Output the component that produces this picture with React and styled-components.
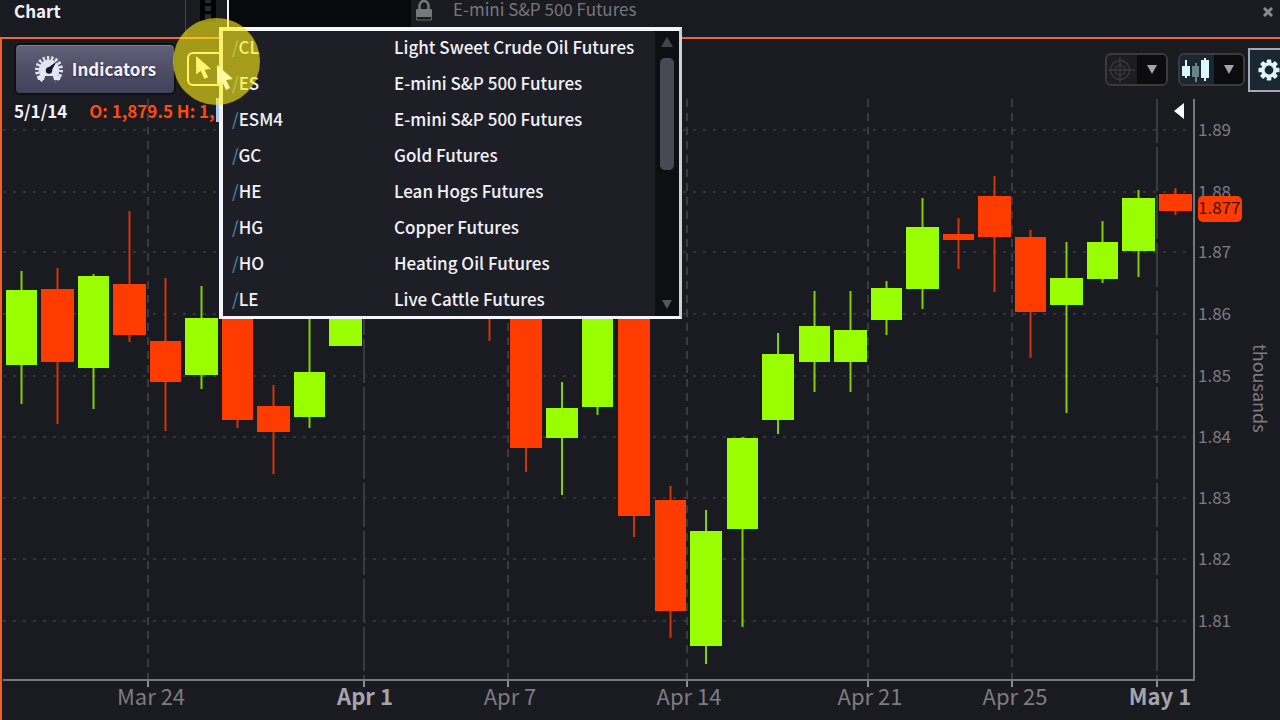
import React, { useState } from 'react';
import styled, { createGlobalStyle } from 'styled-components';

const GlobalStyle = createGlobalStyle`
  * {
    box-sizing: border-box;
  }

  body {
    margin: 0;
    background: #1a1a21;
    color: #f2f2fa;
    font-family: 'Noto Sans CJK SC', 'Noto Sans', sans-serif;
    font-size: 17px;
    line-height: 24px;
    overflow: hidden;
  }

  button,
  input {
    font: inherit;
    color: inherit;
  }
`;

const Window = styled.div`
  position: relative;
  display: flex;
  flex-direction: column;
  min-height: 100vh;
`;

const Header = styled.header`
  display: flex;
  align-items: stretch;
  height: 37px;
`;

const Title = styled.h1`
  flex: 0 0 186px;
  margin: 0;
  padding: 0 14px;
  border-right: 1px solid #44444c;
  font-size: 17px;
  line-height: 22px;
  font-weight: 700;
`;

const LinkStrip = styled.div`
  flex: 0 0 41px;
  padding-left: 14px;
`;

const SymbolInput = styled.input`
  flex: 0 0 184px;
  min-width: 0;
  padding: 0 8px;
  border: 0;
  border-left: 2px solid #f2f2fa;
  border-radius: 0;
  background: #08090d;
  outline: none;
`;

const SymbolName = styled.div`
  flex: 1;
  display: flex;
  align-items: flex-start;
  gap: 20px;
  padding-left: 4px;
  color: #77777c;
  font-size: 17px;
  line-height: 18px;
`;

const CloseButton = styled.button`
  display: flex;
  align-items: center;
  justify-content: center;
  width: 24px;
  height: 24px;
  padding: 0;
  border: 0;
  background: none;
  color: #8a8a92;
`;

const Panel = styled.main`
  flex: 1;
  border-top: 2px solid #f0663a;
  border-left: 2px solid #f0602a;
`;

const Toolbar = styled.div`
  display: flex;
  align-items: center;
  gap: 11px;
  height: 59px;
  padding-left: 12px;
`;

const IndicatorsButton = styled.button`
  display: flex;
  align-items: center;
  justify-content: center;
  gap: 8px;
  width: 162px;
  height: 52px;
  padding: 0;
  border: 2px solid #101014;
  border-radius: 6px;
  background: linear-gradient(#63617b, #504e66 50%, #42405a);
  box-shadow: inset 0 1px 0 #807e92;
  font-weight: 700;
  text-shadow: 0 1px 2px #222230;
`;

const PointerButton = styled.button`
  width: 64px;
  height: 34px;
  padding: 2px 0 0 7px;
  border: 2px solid #fff8d0;
  border-radius: 6px;
  background: none;
  text-align: left;
`;

const Tools = styled.div`
  display: flex;
  align-items: center;
  gap: 10px;
  margin-left: auto;
  padding-top: 2px;
`;

const SplitButton = styled.div`
  display: flex;
  height: 33px;
  border: 2px solid #3a3a40;
  border-radius: 6px;
  overflow: hidden;
  background: ${(p) => (p.$active ? '#1a2730' : '#1c1c21')};
`;

const SplitPart = styled.button`
  display: flex;
  align-items: center;
  justify-content: center;
  width: ${(p) => p.$width}px;
  padding: 0;
  border: 0;
  background: ${(p) => (p.$dark ? '#0c0c0f' : 'transparent')};
`;

const SettingsButton = styled.button`
  display: flex;
  align-items: center;
  width: 32px;
  height: 44px;
  margin-left: -7px;
  padding: 0 0 0 8px;
  border: 2px solid #a4a8b6;
  border-right: 0;
  background: #1a2730;
  overflow: hidden;
`;

const ChartArea = styled.section`
  position: relative;
`;

const Quote = styled.div`
  position: absolute;
  top: 0;
  left: 12px;
  display: flex;
  gap: 22px;
  width: 205px;
  height: 24px;
  border-right: 3px solid #a9c4ff;
  font-size: 17px;
  line-height: 26px;
  font-weight: 700;
  white-space: nowrap;
`;

const QuoteValues = styled.span`
  color: #ff4a12;
`;

const Chart = styled.svg`
  display: block;
  width: 100%;
  height: auto;
`;

const AxisText = styled.text`
  fill: ${(p) => (p.$strong ? '#a4a4ac' : '#7c7c82')};
  font-size: ${(p) => p.$size}px;
  font-weight: ${(p) => (p.$strong ? 700 : 400)};
  text-anchor: ${(p) => p.$anchor || 'start'};
`;

const LastPrice = styled.text`
  fill: #3a1408;
  font-size: 17px;
`;

const Menu = styled.div`
  position: absolute;
  top: 27px;
  left: 219px;
  display: flex;
  width: 463px;
  height: 292px;
  border: solid #f4f4fc;
  border-width: 4px 3px 3px 4px;
  border-right-color: #cfd0da;
  background: #1e1f26;
`;

const MenuList = styled.ul`
  flex: 1;
  margin: 0;
  padding: 0;
  overflow: hidden;
  list-style: none;
`;

const MenuItem = styled.button`
  display: grid;
  grid-template-columns: 162px 1fr;
  width: 100%;
  height: 36px;
  padding: 0 0 2px 9px;
  border: 0;
  background: none;
  font-size: 17px;
  font-weight: 500;
  line-height: 32px;
  text-align: left;
  white-space: nowrap;
`;

const Slash = styled.span`
  color: #4a7fa8;
`;

const ScrollTrack = styled.div`
  display: flex;
  flex-direction: column;
  align-items: center;
  width: 24px;
  padding: 6px 0;
  background: #0e0f12;
`;

const ScrollThumb = styled.div`
  width: 14px;
  height: 112px;
  margin: 11px 0 auto;
  border-radius: 5px;
  background: #494954;
`;

const Highlight = styled.div`
  position: absolute;
  top: 18px;
  left: 173px;
  width: 87px;
  height: 87px;
  border-radius: 50%;
  background: rgba(255, 240, 20, 0.6);
  pointer-events: none;
`;

const Cursor = styled.svg`
  position: absolute;
  top: 64px;
  left: 217px;
  pointer-events: none;
`;

const symbols = [
  ['CL', 'Light Sweet Crude Oil Futures'],
  ['ES', 'E-mini S&P 500 Futures'],
  ['ESM4', 'E-mini S&P 500 Futures'],
  ['GC', 'Gold Futures'],
  ['HE', 'Lean Hogs Futures'],
  ['HG', 'Copper Futures'],
  ['HO', 'Heating Oil Futures'],
  ['LE', 'Live Cattle Futures'],
];

const prices = [
  [130, '1.89'],
  [192, '1.88'],
  [252, '1.87'],
  [314, '1.86'],
  [376, '1.85'],
  [437, '1.84'],
  [498, '1.83'],
  [559, '1.82'],
  [621, '1.81'],
];

// x of the grid line, x of the label centre, label, first of month
const dates = [
  [148, 151, 'Mar 24', false],
  [364, 365, 'Apr 1', true],
  [508, 510, 'Apr 7', false],
  [687, 689, 'Apr 14', false],
  [868, 870, 'Apr 21', false],
  [1012, 1015, 'Apr 25', false],
  [1157, 1160, 'May 1', true],
];

// left, right, body top, body bottom, high, low, up
const candles = [
  [6, 37, 290, 365, 271, 404, 1],
  [41, 74, 289, 362, 268, 424, 0],
  [78, 109, 276, 368, 274, 409, 1],
  [113, 146, 284, 335, 211, 342, 0],
  [150, 181, 341, 382, 278, 431, 0],
  [185, 218, 318, 375, 286, 389, 1],
  [222, 253, 290, 420, 280, 428, 0],
  [257, 290, 406, 432, 385, 474, 0],
  [294, 325, 372, 417, 300, 428, 1],
  [329, 362, 290, 346, 280, 346, 1],
  [474, 505, 270, 310, 260, 341, 0],
  [510, 542, 290, 448, 280, 472, 0],
  [546, 578, 408, 438, 382, 495, 1],
  [582, 613, 290, 407, 280, 415, 1],
  [618, 650, 290, 516, 280, 537, 0],
  [655, 686, 500, 611, 486, 638, 0],
  [690, 722, 531, 646, 510, 664, 1],
  [727, 758, 438, 529, 437, 627, 1],
  [762, 794, 354, 420, 333, 434, 1],
  [799, 830, 326, 362, 291, 392, 1],
  [834, 867, 330, 362, 291, 392, 1],
  [871, 902, 288, 320, 281, 335, 1],
  [906, 939, 227, 289, 198, 309, 1],
  [943, 974, 234, 240, 218, 269, 0],
  [978, 1011, 196, 237, 176, 292, 0],
  [1015, 1046, 237, 312, 230, 358, 0],
  [1050, 1083, 278, 305, 242, 413, 1],
  [1087, 1118, 242, 279, 221, 283, 1],
  [1122, 1155, 198, 251, 190, 277, 1],
  [1159, 1192, 194, 211, 188, 215, 0],
];

const GaugeIcon = () => (
  <svg width="30" height="28" viewBox="0 0 30 28" aria-hidden="true">
    <circle cx="15" cy="15" r="12" fill="none" stroke="#e4e4f6" strokeWidth="4" strokeDasharray="2.2 1.8" pathLength="72" />
    <circle cx="15" cy="15" r="10.4" fill="#e4e4f6" />
    <path d="M8 28l3-7h8l3 7z" fill="#4a4860" />
    <path d="M3 21h8l-1 4H4zM27 21h-8l1 4h6z" fill="#e4e4f6" />
    <path d="M13.400 13.200L22.500 6.500l-5 9.300z" fill="#16161e" />
    <circle cx="15" cy="15.500" r="3.200" fill="#16161e" />
  </svg>
);

const LockIcon = () => (
  <svg width="18" height="22" viewBox="0 0 18 22" aria-hidden="true">
    <path d="M4.500 9V6a4.500 5 0 0 1 9 0v3" fill="none" stroke="#77777c" strokeWidth="2.500" />
    <rect x="1" y="9" width="16" height="8" rx="1" fill="#77777c" />
    <path d="M1.500 17v3h15v-3" fill="none" stroke="#66666b" />
  </svg>
);

const FilmIcon = () => (
  <svg width="16" height="22" viewBox="0 0 16 22" aria-hidden="true">
    <path d="M0 0h16v22H0z" fill="#030305" />
    <path d="M5 0h6v3H5zM5 6h6v5H5zM5 14h6v5H5z" fill="#2a2a30" />
  </svg>
);

const TargetIcon = () => (
  <svg width="28" height="28" viewBox="0 0 28 28" fill="none" stroke="#38383c" strokeWidth="1.500" aria-hidden="true">
    <circle cx="12" cy="14" r="9.500" />
    <circle cx="12" cy="14" r="5" />
    <path d="M0 14h27M12 1v26" />
  </svg>
);

const CandlesIcon = () => (
  <svg width="30" height="24" viewBox="0 0 30 24" aria-hidden="true">
    <path d="M0 8h8v10H0zM3 2h2v18H3zM19 2h8v18h-8zM22 0h2v23h-2z" fill="#dcf8fa" />
    <path d="M10 8h7v11h-7zM13 5h2v19h-2z" fill="#68868a" />
  </svg>
);

const GearIcon = () => (
  <svg width="24" height="24" viewBox="-12 -12 24 24" aria-hidden="true">
    <g fill="#dcf6fa">
      {[0, 45, 90, 135].map((angle) => (
        <rect key={angle} x="-2.500" y="-11.500" width="5" height="23" rx="1" transform={`rotate(${angle})`} />
      ))}
      <circle r="8.500" />
    </g>
    <circle r="4.800" fill="#1a2730" />
  </svg>
);

const ArrowIcon = ({ up, color = '#a4a4a8' }) => (
  <svg width="12" height="10" viewBox="0 0 12 10" aria-hidden="true">
    <path d={up ? 'M6 0l6 10H0z' : 'M1 0h10L6 9z'} fill={color} />
  </svg>
);

const pointerPath = 'M0 0v20l5-4 4 9 4-2-4-8 7-1z';

const PriceChart = () => (
  <Chart viewBox="2 98 1278 622" role="img" aria-label="Daily price chart">
    <g stroke="#34343b" strokeWidth="2" strokeDasharray="3 7">
      {prices.map(([y]) => (
        <line key={y} x1="3" x2="1192" y1={y} y2={y} />
      ))}
    </g>
    {dates.map(([x, labelX, label, strong]) => (
      <g key={label}>
        <line x1={x} x2={x} y1="99" y2="680" stroke="#3a3a41" strokeWidth="2" strokeDasharray={strong ? '44 4' : '8 6'} />
        <line x1={x} x2={x} y1="680" y2="687" stroke="#8b8b92" strokeWidth="2" />
        <AxisText x={labelX} y="705" $size={22} $strong={strong} $anchor="middle">
          {label}
        </AxisText>
      </g>
    ))}
    {candles.map(([left, right, top, bottom, high, low, up]) => {
      const color = up ? '#99ff00' : '#ff3c00';
      const middle = (left + right) / 2;
      return (
        <g key={left} fill={color}>
          <rect x={middle - 1} y={high} width="2" height={low - high} opacity="0.8" />
          <rect x={left} y={top} width={right - left} height={bottom - top} />
        </g>
      );
    })}
    <path d="M3 680h1191V99" fill="none" stroke="#77777f" strokeWidth="2" />
    {prices.map(([y, label]) => (
      <AxisText key={label} x="1198" y={y + 6} $size={17}>
        {label}
      </AxisText>
    ))}
    <rect x="1198" y="196" width="44" height="26" rx="5" fill="#ff3c00" />
    <LastPrice x="1198" y="214">1.877</LastPrice>
    <path d="M1184 103v16l-10-8z" fill="#fff" />
    <AxisText $size={18} transform="translate(1253 344) rotate(90)">
      thousands
    </AxisText>
  </Chart>
);

const App = () => {
  const [symbol, setSymbol] = useState('');

  return (
    <Window>
      <GlobalStyle />
      <Header>
        <Title>Chart</Title>
        <LinkStrip>
          <FilmIcon />
        </LinkStrip>
        <SymbolInput aria-label="Symbol" value={symbol} onChange={(e) => setSymbol(e.target.value)} />
        <SymbolName>
          <LockIcon />
          E-mini S&amp;P 500 Futures
        </SymbolName>
        <CloseButton aria-label="Close">
          <svg width="10" height="10" viewBox="0 0 10 10" stroke="currentColor" strokeWidth="3">
            <path d="M1 1l8 8M9 1l-8 8" />
          </svg>
        </CloseButton>
      </Header>

      <Panel>
        <Toolbar>
          <IndicatorsButton>
            <GaugeIcon />
            Indicators
          </IndicatorsButton>
          <PointerButton aria-label="Pointer">
            <svg width="16" height="24" viewBox="0 0 17 26">
              <path d={pointerPath} fill="#fff" />
            </svg>
          </PointerButton>
          <Tools>
            <SplitButton>
              <SplitPart $width={30} aria-label="Crosshair">
                <TargetIcon />
              </SplitPart>
              <SplitPart $width={29} $dark aria-label="Crosshair options">
                <ArrowIcon />
              </SplitPart>
            </SplitButton>
            <SplitButton $active>
              <SplitPart $width={34} aria-label="Candles">
                <CandlesIcon />
              </SplitPart>
              <SplitPart $width={29} $dark aria-label="Chart styles">
                <ArrowIcon />
              </SplitPart>
            </SplitButton>
            <SettingsButton aria-label="Settings">
              <GearIcon />
            </SettingsButton>
          </Tools>
        </Toolbar>
        <ChartArea>
          <PriceChart />
          <Quote>
            <span>5/1/14</span>
            <QuoteValues>O: 1,879.5 H: 1,</QuoteValues>
          </Quote>
        </ChartArea>
      </Panel>

      <Menu>
        <MenuList>
          {symbols.map(([code, name]) => (
            <li key={code}>
              <MenuItem onClick={() => setSymbol('/' + code)}>
                <span>
                  <Slash>/</Slash>
                  {code}
                </span>
                <span>{name}</span>
              </MenuItem>
            </li>
          ))}
        </MenuList>
        <ScrollTrack>
          <ArrowIcon up color="#44444a" />
          <ScrollThumb />
          <ArrowIcon color="#55555c" />
        </ScrollTrack>
      </Menu>

      <Highlight />
      <Cursor width="17" height="28" viewBox="0 0 17 26" aria-hidden="true">
        <path d={pointerPath} fill="#fff9a4" />
      </Cursor>
    </Window>
  );
};

export default App;
